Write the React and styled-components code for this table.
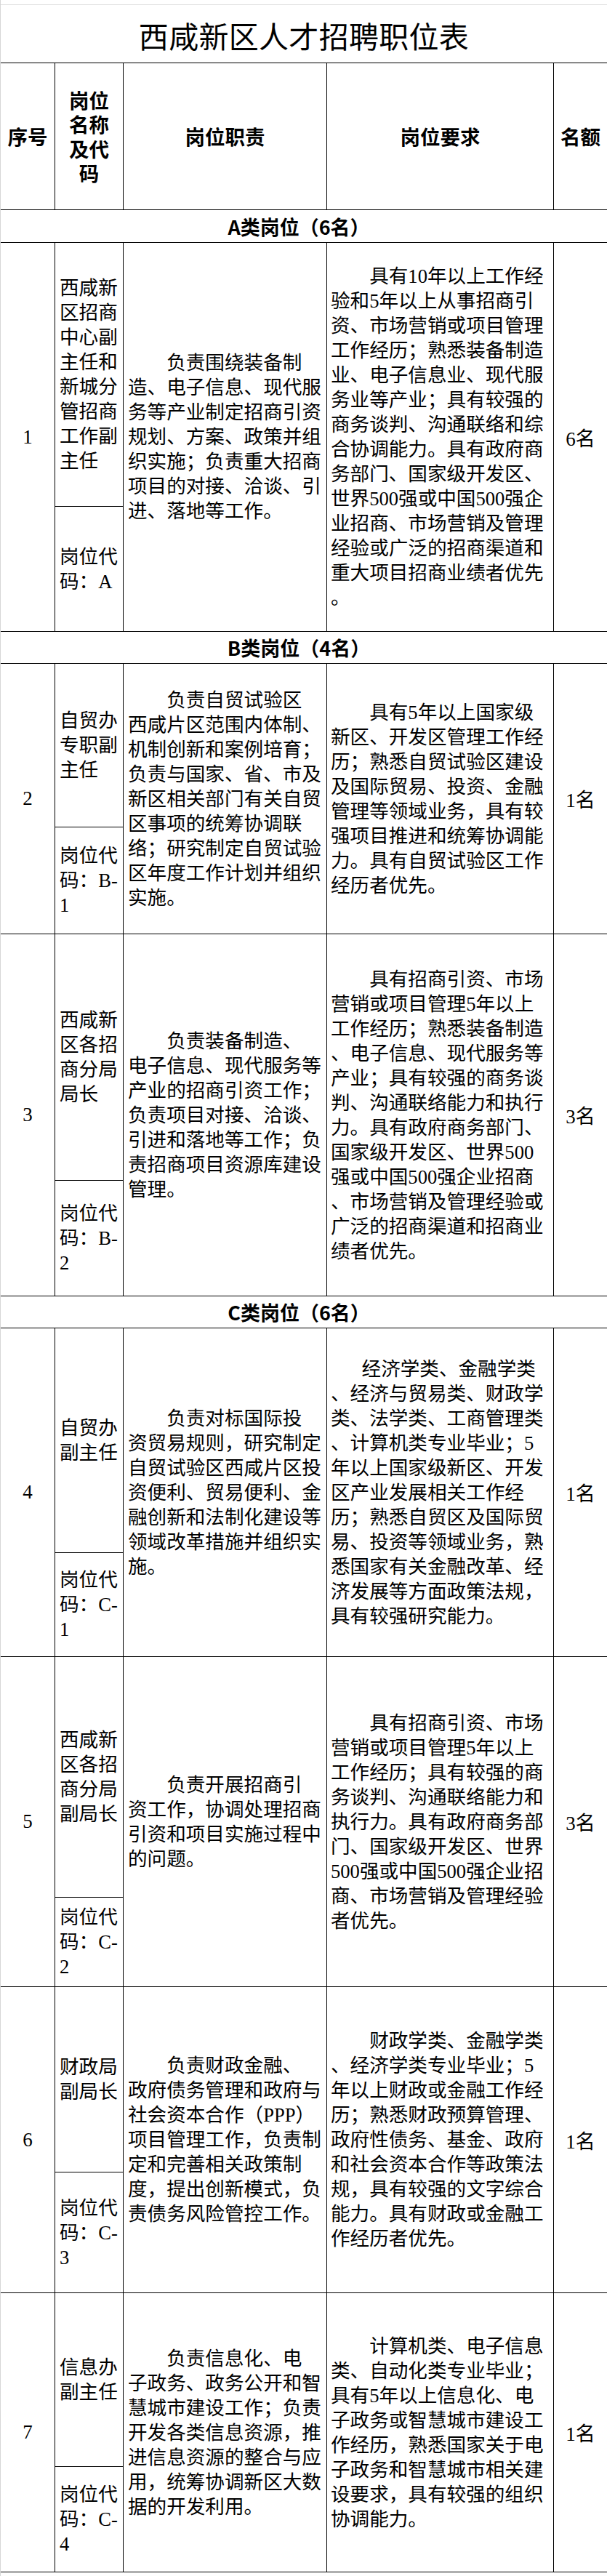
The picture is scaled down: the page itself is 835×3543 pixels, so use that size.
import React from 'react';
import styled, { createGlobalStyle } from 'styled-components';

const GlobalStyle = createGlobalStyle`
  html, body {
    margin: 0;
    padding: 0;
    background: #fff;
  }
  body {
    font-family: "Liberation Serif", "Noto Sans CJK SC", serif;
    color: #000;
  }
`;

const COLS = '75px 94px 280px 312px 1fr';

const Page = styled.div`
  width: 835px;
  height: 3543px;
  box-sizing: border-box;
  border-left: 1px solid #d6d6d6;
  padding-top: 6px;
  overflow: hidden;
`;

const Title = styled.h1`
  margin: 0;
  height: 80px;
  box-sizing: border-box;
  border-top: 1px solid #dedede;
  padding-top: 3px;
  display: flex;
  align-items: center;
  justify-content: center;
  font-family: "Noto Sans CJK SC", sans-serif;
  font-weight: 400;
  font-size: 41px;
  letter-spacing: 0.3px;
`;

const Table = styled.div`
  border-top: 1px solid #000;
`;

const Row = styled.div`
  display: grid;
  grid-template-columns: ${COLS};
  height: ${(p) => p.$h}px;
  box-sizing: border-box;
  border-bottom: 1px solid #000;
`;

const Band = styled.div`
  height: ${(p) => p.$h}px;
  box-sizing: border-box;
  border-bottom: 1px solid #000;
  display: flex;
  align-items: center;
  justify-content: center;
  font-family: "Noto Sans CJK SC", sans-serif;
  font-weight: 700;
  font-size: 27px;
  padding-right: 14px;
`;

const Cell = styled.div`
  display: flex;
  flex-direction: column;
  justify-content: center;
  align-items: ${(p) => (p.$center ? 'center' : 'stretch')};
  border-right: 1px solid #000;
  min-width: 0;
  &:last-child {
    border-right: none;
  }
`;

const HeadCell = styled(Cell)`
  font-family: "Noto Sans CJK SC", sans-serif;
  font-weight: 700;
  font-size: 27.5px;
  line-height: 33.5px;
  text-align: center;
`;

const NumCell = styled(Cell)`
  font-size: 27px;
  text-align: center;
`;

const NameCell = styled.div`
  display: flex;
  flex-direction: column;
  border-right: 1px solid #000;
`;

const NamePart = styled.div`
  display: flex;
  flex-direction: column;
  justify-content: center;
  box-sizing: border-box;
  ${(p) => (p.$h ? `height: ${p.$h}px; border-bottom: 1px solid #000;` : 'flex: 1;')}
`;

const Lines = styled.div`
  padding-left: ${(p) => p.$pad}px;
  font-size: 26.6px;
  line-height: 34px;
`;

const Line = styled.div`
  white-space: pre;
  padding-left: ${(p) => (p.$indent ? `${p.$indent}em` : '0')};
`;

function TextLines({ lines, pad = 6, indent = 0 }) {
  return (
    <Lines $pad={pad}>
      {lines.map((l, i) => (
        <Line key={i} $indent={i === 0 ? indent : 0}>
          {l}
        </Line>
      ))}
    </Lines>
  );
}

const sections = [
  {
    band: 'A类岗位（6名）',
    bandH: 45,
    rows: [
      {
        no: '1',
        h: 535,
        top: 363,
        name: ['西咸新', '区招商', '中心副', '主任和', '新城分', '管招商', '工作副', '主任'],
        code: ['岗位代', '码：A'],
        duty: [
          '负责围绕装备制',
          '造、电子信息、现代服',
          '务等产业制定招商引资',
          '规划、方案、政策并组',
          '织实施；负责重大招商',
          '项目的对接、洽谈、引',
          '进、落地等工作。',
        ],
        req: [
          '具有10年以上工作经',
          '验和5年以上从事招商引',
          '资、市场营销或项目管理',
          '工作经历；熟悉装备制造',
          '业、电子信息业、现代服',
          '务业等产业；具有较强的',
          '商务谈判、沟通联络和综',
          '合协调能力。具有政府商',
          '务部门、国家级开发区、',
          '世界500强或中国500强企',
          '业招商、市场营销及管理',
          '经验或广泛的招商渠道和',
          '重大项目招商业绩者优先',
          '。',
        ],
        count: '6名',
      },
    ],
  },
  {
    band: 'B类岗位（4名）',
    bandH: 44,
    rows: [
      {
        no: '2',
        h: 372,
        top: 225,
        name: ['自贸办', '专职副', '主任'],
        code: ['岗位代', '码：B-', '1'],
        duty: [
          '负责自贸试验区',
          '西咸片区范围内体制、',
          '机制创新和案例培育；',
          '负责与国家、省、市及',
          '新区相关部门有关自贸',
          '区事项的统筹协调联',
          '络；研究制定自贸试验',
          '区年度工作计划并组织',
          '实施。',
        ],
        req: [
          '具有5年以上国家级',
          '新区、开发区管理工作经',
          '历；熟悉自贸试验区建设',
          '及国际贸易、投资、金融',
          '管理等领域业务，具有较',
          '强项目推进和统筹协调能',
          '力。具有自贸试验区工作',
          '经历者优先。',
        ],
        count: '1名',
      },
      {
        no: '3',
        h: 498,
        top: 339,
        name: ['西咸新', '区各招', '商分局', '局长'],
        code: ['岗位代', '码：B-', '2'],
        duty: [
          '负责装备制造、',
          '电子信息、现代服务等',
          '产业的招商引资工作；',
          '负责项目对接、洽谈、',
          '引进和落地等工作；负',
          '责招商项目资源库建设',
          '管理。',
        ],
        req: [
          '具有招商引资、市场',
          '营销或项目管理5年以上',
          '工作经历；熟悉装备制造',
          '、电子信息、现代服务等',
          '产业；具有较强的商务谈',
          '判、沟通联络能力和执行',
          '力。具有政府商务部门、',
          '国家级开发区、世界500',
          '强或中国500强企业招商',
          '、市场营销及管理经验或',
          '广泛的招商渠道和招商业',
          '绩者优先。',
        ],
        count: '3名',
      },
    ],
  },
  {
    band: 'C类岗位（6名）',
    bandH: 44,
    rows: [
      {
        no: '4',
        h: 452,
        top: 309,
        name: ['自贸办', '副主任'],
        code: ['岗位代', '码：C-', '1'],
        duty: [
          '负责对标国际投',
          '资贸易规则，研究制定',
          '自贸试验区西咸片区投',
          '资便利、贸易便利、金',
          '融创新和法制化建设等',
          '领域改革措施并组织实',
          '施。',
        ],
        req: [
          '经济学类、金融学类',
          '、经济与贸易类、财政学',
          '类、法学类、工商管理类',
          '、计算机类专业毕业；5',
          '年以上国家级新区、开发',
          '区产业发展相关工作经',
          '历；熟悉自贸区及国际贸',
          '易、投资等领域业务，熟',
          '悉国家有关金融改革、经',
          '济发展等方面政策法规，',
          '具有较强研究能力。',
        ],
        reqIndent: 1.6,
        count: '1名',
      },
      {
        no: '5',
        h: 454,
        top: 331,
        name: ['西咸新', '区各招', '商分局', '副局长'],
        code: ['岗位代', '码：C-', '2'],
        duty: ['负责开展招商引', '资工作，协调处理招商', '引资和项目实施过程中', '的问题。'],
        req: [
          '具有招商引资、市场',
          '营销或项目管理5年以上',
          '工作经历；具有较强的商',
          '务谈判、沟通联络能力和',
          '执行力。具有政府商务部',
          '门、国家级开发区、世界',
          '500强或中国500强企业招',
          '商、市场营销及管理经验',
          '者优先。',
        ],
        count: '3名',
      },
      {
        no: '6',
        h: 421,
        top: 255,
        name: ['财政局', '副局长'],
        code: ['岗位代', '码：C-', '3'],
        duty: [
          '负责财政金融、',
          '政府债务管理和政府与',
          '社会资本合作（PPP）',
          '项目管理工作，负责制',
          '定和完善相关政策制',
          '度，提出创新模式，负',
          '责债务风险管控工作。',
        ],
        req: [
          '财政学类、金融学类',
          '、经济学类专业毕业；5',
          '年以上财政或金融工作经',
          '历；熟悉财政预算管理、',
          '政府性债务、基金、政府',
          '和社会资本合作等政策法',
          '规，具有较强的文字综合',
          '能力。具有财政或金融工',
          '作经历者优先。',
        ],
        count: '1名',
      },
      {
        no: '7',
        h: 384,
        top: 239,
        name: ['信息办', '副主任'],
        code: ['岗位代', '码：C-', '4'],
        duty: [
          '负责信息化、电',
          '子政务、政务公开和智',
          '慧城市建设工作；负责',
          '开发各类信息资源，推',
          '进信息资源的整合与应',
          '用，统筹协调新区大数',
          '据的开发利用。',
        ],
        req: [
          '计算机类、电子信息',
          '类、自动化类专业毕业；',
          '具有5年以上信息化、电',
          '子政务或智慧城市建设工',
          '作经历，熟悉国家关于电',
          '子政务和智慧城市相关建',
          '设要求，具有较强的组织',
          '协调能力。',
        ],
        count: '1名',
      },
    ],
  },
];

function JobRow({ row }) {
  return (
    <Row $h={row.h}>
      <NumCell $center>{row.no}</NumCell>
      <NameCell>
        <NamePart $h={row.top}>
          <TextLines lines={row.name} pad={6} />
        </NamePart>
        <NamePart>
          <TextLines lines={row.code} pad={6} />
        </NamePart>
      </NameCell>
      <Cell>
        <TextLines lines={row.duty} pad={6} indent={2} />
      </Cell>
      <Cell>
        <TextLines lines={row.req} pad={5} indent={row.reqIndent || 2} />
      </Cell>
      <NumCell $center>{row.count}</NumCell>
    </Row>
  );
}

export default function App() {
  return (
    <Page>
      <GlobalStyle />
      <Title>西咸新区人才招聘职位表</Title>
      <Table>
        <Row $h={202}>
          <HeadCell>序号</HeadCell>
          <HeadCell>
            岗位
            <br />
            名称
            <br />
            及代
            <br />码
          </HeadCell>
          <HeadCell>岗位职责</HeadCell>
          <HeadCell>岗位要求</HeadCell>
          <HeadCell>名额</HeadCell>
        </Row>
        {sections.map((s) => (
          <React.Fragment key={s.band}>
            <Band $h={s.bandH}>{s.band}</Band>
            {s.rows.map((r) => (
              <JobRow key={r.no} row={r} />
            ))}
          </React.Fragment>
        ))}
      </Table>
    </Page>
  );
}
